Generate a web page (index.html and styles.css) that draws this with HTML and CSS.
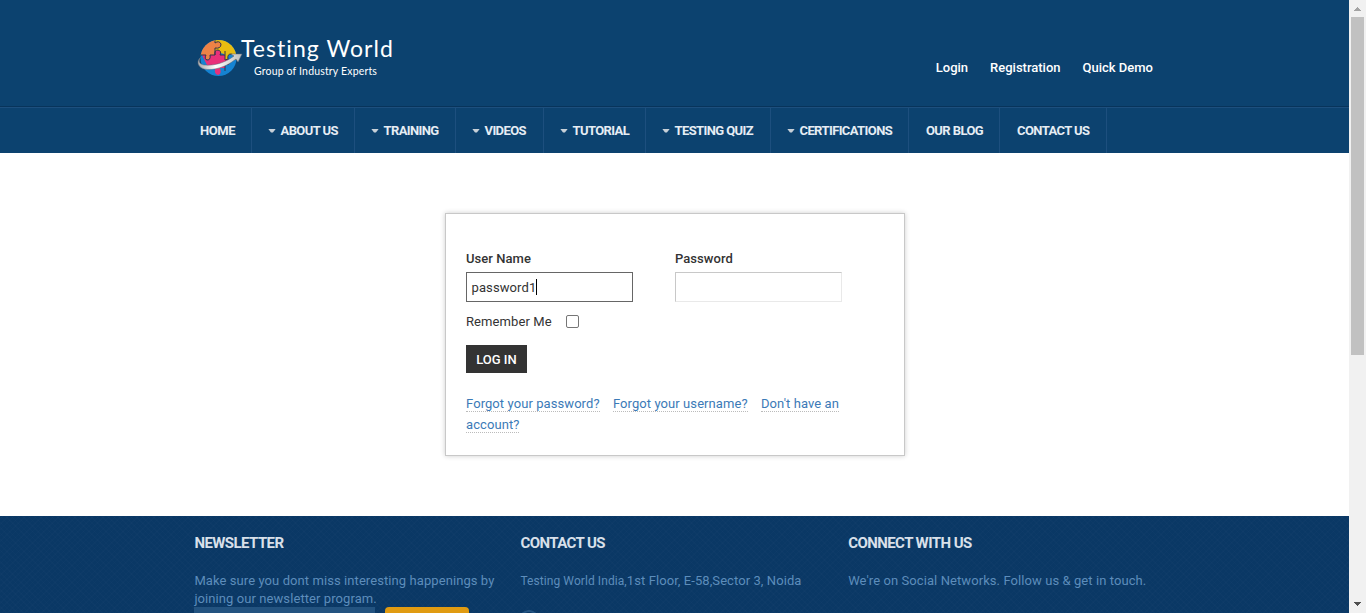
FILE: index.html
```html
<!DOCTYPE html>
<html lang="en">
<head>
<meta charset="utf-8">
<title>Testing World</title>
<link rel="stylesheet" href="styles.css">
</head>
<body>
<div class="page">
  <header class="header">
    <svg class="logo" width="200" height="46" viewBox="0 0 200 46">
      <defs>
        <clipPath id="globe"><circle cx="21.5" cy="23" r="18"/></clipPath>
        <linearGradient id="swoosh"><stop offset="0" stop-color="#aaa"/><stop offset=".4" stop-color="#fff"/><stop offset="1" stop-color="#bbb"/></linearGradient>
      </defs>
      <g clip-path="url(#globe)">
        <rect width="46" height="46" fill="#1583d2"/>
        <path d="M17 0H46V25H37Q37 19 33 19Q30 20 31 25H27V19L17 16Z" fill="#e9bd10"/>
        <path d="M0 0H18V8Q22 5 24 9Q24 14 18 13V20H13Q14 25 10 25Q7 24 9 20H0Z" fill="#ee8246"/>
        <path d="M5 20H9Q7 24 10 25Q14 25 13 20H18Q17 15 21 15Q25 16 23 20H28V25Q33 23 33 27Q32 31 28 29V33H23Q25 39 21 40Q17 39 18 34H12Z" fill="#e8307a"/>
        <path d="M18 3V8Q22 5 24 9Q24 14 18 13V20H13Q14 25 10 25Q7 24 9 20H4M18 20Q17 15 21 15Q25 16 23 20H28V25Q33 23 33 27Q32 31 28 29V36M28 20V16M31 24Q30 19 34 19Q38 20 37 24H40" fill="none" stroke="#35324a" stroke-width="1"/>
      </g>
      <path d="M4 22C1 26 2 29 7 30C19 31 29 27 37 21L34 19L45 19L41 27L39 24C29 32 17 36 7 34C-1 31 0 25 4 22Z" fill="url(#swoosh)" stroke="#5b6778" stroke-width=".5"/>
      <text class="logo-name" x="44" y="22" textLength="152">Testing World</text>
      <text class="logo-tag" x="57" y="40" textLength="123">Group of Industry Experts</text>
    </svg>
    <div class="account"><a class="login">Login</a><a class="registration">Registration</a><a class="demo">Quick Demo</a></div>
  </header>
  <nav class="menu">
    <a class="item home">HOME</a>
    <a class="item about"><i class="caret"></i>ABOUT US</a>
    <a class="item training"><i class="caret"></i>TRAINING</a>
    <a class="item videos"><i class="caret"></i>VIDEOS</a>
    <a class="item tutorial"><i class="caret"></i>TUTORIAL</a>
    <a class="item quiz"><i class="caret"></i>TESTING QUIZ</a>
    <a class="item certs"><i class="caret"></i>CERTIFICATIONS</a>
    <a class="item blog">OUR BLOG</a>
    <a class="item contact">CONTACT US</a>
  </nav>
  <main class="content">
    <form class="card">
      <div class="fields">
        <div class="field"><b class="label">User Name</b><div class="input focused">password1<span class="cursor"></span></div></div>
        <div class="field"><b class="label">Password</b><div class="input"></div></div>
      </div>
      <div class="remember">Remember Me<span class="check"></span></div>
      <div class="button">LOG IN</div>
      <div class="links"><a class="link">Forgot your password?</a><a class="link">Forgot your username?</a><a class="link">Don't have an</a><a class="link">account?</a></div>
    </form>
  </main>
  <footer class="footer">
    <section class="column newsletter"><h3 class="title">NEWSLETTER</h3><p class="copy">Make sure you dont miss interesting happenings by joining our newsletter program.</p><div class="signup"><div class="email"></div><div class="subscribe"></div></div></section>
    <section class="column address"><h3 class="title">CONTACT US</h3><p class="copy"><span class="company">Testing World India,</span>1st Floor, E-58,Sector 3, Noida</p><svg class="phone" width="54" height="20" viewBox="0 0 54 20"><path d="M2 4Q9-2 16 4" fill="none" stroke="#245482" stroke-width="2"/></svg></section>
    <section class="column social"><h3 class="title">CONNECT WITH US</h3><p class="copy">We're on Social Networks. Follow us &amp; get in touch.</p></section>
  </footer>
</div>
<aside class="scrollbar"><svg width="17" height="17"><path d="M5 11V10H6V9H7V8H8V7H9V8H10V9H11V10H12V11Z" fill="#a3a3a3"/></svg><div class="thumb"></div><svg width="17" height="17"><path d="M5 6H12V7H11V8H10V9H9V10H8V9H7V8H6V7H5Z" fill="#505050"/></svg></aside>
</body>
</html>
```
FILE: styles.css
```css
* { box-sizing: border-box; }
body { margin: 0; height: 613px; display: flex; overflow: hidden; background: #fff; color: #333; font: 13px/18px Roboto, sans-serif; letter-spacing: .1px; }
.page { width: 1349px; height: 613px; overflow: hidden; }
.header { height: 107px; padding: 35px 196px 0 197px; display: flex; justify-content: space-between; background: #0c426f; border-bottom: 1px solid #08345b; }
.logo { flex: none; }
.logo-name { font: 23px Lato, sans-serif; fill: #fff; }
.logo-tag { font: 10.5px Lato, sans-serif; fill: #fff; }
.account { display: flex; gap: 22px; padding-top: 24px; color: #fff; font-weight: 500; letter-spacing: 0; white-space: nowrap; }
.menu { height: 46px; padding-left: 184px; display: flex; background: #0c426f; border-top: 1px solid #1d4f7e; }
.item { flex: none; height: 45px; padding-left: 16px; display: flex; align-items: center; border-right: 1px solid #1d4f7e; color: #e6edf4; font-weight: 700; letter-spacing: -.6px; white-space: nowrap; }
.caret { width: 8px; height: 4px; margin: 0 4.5px 0 0; background: #c7d0d8; clip-path: polygon(0 0, 100% 0, 62% 100%, 38% 100%); }
.home { width: 68px; letter-spacing: -.4px; }
.about { width: 103px; }
.training { width: 101px; }
.videos { width: 88px; }
.tutorial { width: 102px; }
.quiz { width: 125px; }
.certs { width: 138px; }
.blog { width: 91px; padding-left: 17px; }
.contact { width: 107px; padding-left: 17px; }
.content { height: 363px; padding: 60px 0 0 445px; }
.card { width: 460px; height: 243px; padding: 36px 20px 0; border: 1px solid #c8c8c8; box-shadow: 0 0 5px rgba(0, 0, 0, .2); }
.fields { display: flex; gap: 42px; }
.label { display: block; height: 22px; font-weight: 500; letter-spacing: .05px; }
.input { width: 167px; height: 30px; padding: 1px 5px 0; display: flex; align-items: center; border: 1px solid; border-color: #c8c8c8 #e9e9e9 #e9e9e9 #c8c8c8; }
.focused { padding-left: 4.5px; border-color: #666; }
.cursor { width: 1px; height: 16px; margin-top: -1px; background: #000; }
.remember { height: 18px; margin-top: 11px; display: flex; align-items: center; }
.check { width: 13px; height: 13px; margin: -1px 0 0 14px; border: 1px solid #767676; border-radius: 2px; }
.button { width: 61px; height: 28px; margin: 14px 0 20px; background: #333; color: #fff; font-weight: 500; line-height: 29px; text-align: center; letter-spacing: 0; }
.links { width: 395px; display: flex; flex-wrap: wrap; column-gap: 13.3px; row-gap: 4px; padding-top: 2px; color: #3b7ab7; line-height: 18px; letter-spacing: .08px; }
.link { height: 17px; border-bottom: 1px dotted #bbb; }
.footer { height: 97px; padding: 18px 0 0 194.4px; display: flex; background-color: #0a3865; background-image: repeating-linear-gradient(45deg, rgba(255, 255, 255, .012) 0 1px, transparent 1px 4px), repeating-linear-gradient(-45deg, rgba(255, 255, 255, .012) 0 1px, transparent 1px 4px); color: #5d8dbb; letter-spacing: .08px; }
.newsletter { width: 326px; }
.address { width: 327.8px; }
.social { width: 320px; }
.title { margin: 0 0 19px; color: #d9e0ea; font-size: 15px; font-weight: 700; line-height: 19px; letter-spacing: -.57px; }
.copy { margin: 0; white-space: nowrap; }
.newsletter .copy { width: 310px; height: 35px; white-space: normal; }
.company { font-size: 12px; }
.signup { display: flex; gap: 10px; }
.email { width: 181px; height: 30px; background: #235380; }
.subscribe { width: 84px; height: 30px; border-radius: 4px; background: #e09b12; }
.phone { display: block; margin-top: 20px; }
.scrollbar { width: 17px; height: 613px; background: #f1f1f1; }
.scrollbar svg { display: block; }
.thumb { width: 13px; height: 338px; margin: 0 2px 241px; background: #c1c1c1; }
```
